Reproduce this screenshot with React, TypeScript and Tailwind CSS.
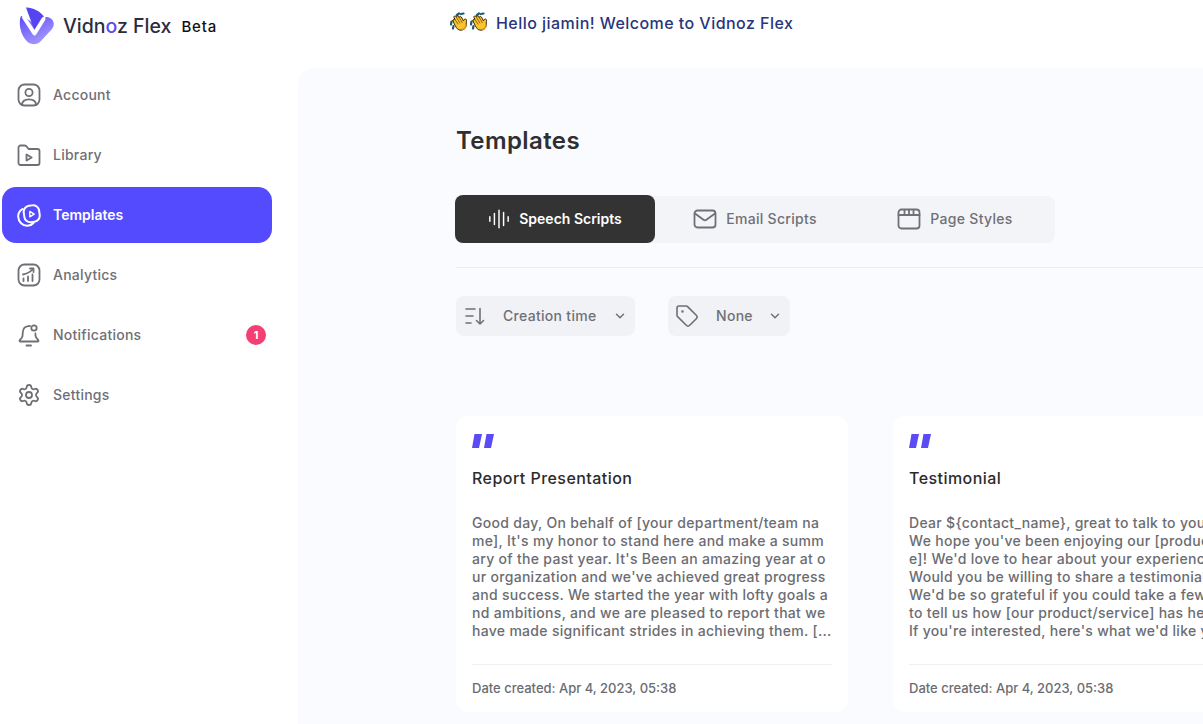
import React from 'react';
import { ChevronDown, Settings, Tag } from 'lucide-react';

const reportLines = [
  'Good day, On behalf of [your department/team na',
  "me], It's my honor to stand here and make a summ",
  "ary of the past year. It's Been an amazing year at o",
  "ur organization and we've achieved great progress",
  'and success. We started the year with lofty goals a',
  'nd ambitions, and we are pleased to report that we',
  'have made significant strides in achieving them. [...',
];

const testimonialLines = [
  'Dear ${contact_name}, great to talk to you today.',
  "We hope you've been enjoying our [product/servic",
  "e]! We'd love to hear about your experience so far.",
  'Would you be willing to share a testimonial with us?',
  "We'd be so grateful if you could take a few minutes",
  'to tell us how [our product/service] has helped you.',
  "If you're interested, here's what we'd like you to",
];

function AccountIcon() {
  return (
    <svg width="24" height="24" viewBox="0 0 24 24" fill="none" stroke="currentColor" strokeWidth="1.8" strokeLinecap="round" strokeLinejoin="round">
      <rect x="1.5" y="1.5" width="21" height="21" rx="6" />
      <circle cx="12" cy="9.5" r="3.6" />
      <path d="M4.8 22c.4-3.6 3-5.6 7.2-5.600s6.800 2 7.200 5.600" />
    </svg>
  );
}

function LibraryIcon() {
  return (
    <svg width="24" height="24" viewBox="0 0 24 24" fill="none" stroke="currentColor" strokeWidth="1.8" strokeLinecap="round" strokeLinejoin="round">
      <path d="M1.500 8V4.500a2 2 0 0 1 2-2h4.200c1 0 1.600.4 2.200 1.200l1.600 2.300h9a2 2 0 0 1 2 2v12a2 2 0 0 1-2 2H3.500a2 2 0 0 1-2-2V8" />
      <path d="M9.500 11.500v6l5.200-3z" />
    </svg>
  );
}

function TemplatesIcon() {
  return (
    <svg width="24" height="24" viewBox="0 0 24 24" fill="none" stroke="currentColor" strokeWidth="2" strokeLinecap="round" strokeLinejoin="round">
      <rect x="7" y="2.500" width="15.500" height="16.500" rx="6" transform="rotate(-8 15 11)" />
      <path d="M5.500 6C2.600 7.800 1 10.600 1.200 13.800c.3 5 4.300 9 9.300 8.900 2.500 0 4.500-1 6-2.700" />
      <path d="M12.800 8.400v5.400l4.400-2.700z" strokeWidth="1.400" />
    </svg>
  );
}

function AnalyticsIcon() {
  return (
    <svg width="24" height="24" viewBox="0 0 24 24" fill="none" stroke="currentColor" strokeWidth="1.800" strokeLinecap="round" strokeLinejoin="round">
      <rect x="1.500" y="1.500" width="21" height="21" rx="6" />
      <path d="M6.500 18v-2.500M11 18v-4.500M15.500 18v-6.500M6 11.500c3.800-.6 7-2.300 10-5.500" />
      <path d="M13 5.500h3.500V9" />
    </svg>
  );
}

function BellIcon() {
  return (
    <svg width="24" height="24" viewBox="0 0 24 24" fill="none" stroke="currentColor" strokeWidth="1.800" strokeLinecap="round" strokeLinejoin="round">
      <path d="M13 3.100c-.6-.1-1.200-.1-1.800 0C8 3.500 6 6.200 5.800 9.300l-.3 3.800c-.1 1.400-1.400 2.700-2.700 3.900-.6.700-.2 1.500.7 1.500h17c.9 0 1.300-.8.700-1.500-1.300-1.200-2.400-2.500-2.600-3.900l-.2-2.600" />
      <circle cx="17" cy="5" r="2.700" />
      <path d="M9.500 22.500h4.500" />
    </svg>
  );
}

function WaveIcon() {
  return (
    <svg width="22" height="24" viewBox="0 0 24 24" fill="none" stroke="currentColor" strokeWidth="1.600" strokeLinecap="round">
      <path d="M2 9.500v5M7 6v12M12 2.500v19M17 5v14M22 9.500v5" />
    </svg>
  );
}

function MailIcon() {
  return (
    <svg width="24" height="24" viewBox="0 0 24 24" fill="none" stroke="currentColor" strokeWidth="1.800" strokeLinecap="round" strokeLinejoin="round">
      <rect x="1.500" y="3.500" width="21" height="17" rx="3" />
      <path d="m2 6.500 8.500 6.300c.9.700 2 .7 2.900 0L22 6.500" />
    </svg>
  );
}

function PageIcon() {
  return (
    <svg width="24" height="24" viewBox="0 0 24 24" fill="none" stroke="currentColor" strokeWidth="1.800" strokeLinecap="round" strokeLinejoin="round">
      <rect x="1.500" y="2.500" width="21" height="19" rx="3" />
      <path d="M1.500 8h21M7.500 3v4.500M12 3v4.500M16.500 3v4.500" />
    </svg>
  );
}

function SortIcon() {
  return (
    <svg width="22" height="22" viewBox="0 0 22 22" fill="none" stroke="currentColor" strokeWidth="1.600" strokeLinecap="round" strokeLinejoin="round">
      <path d="M2 4h9M2 11h7M2 18h5M16 3.500V19M12.500 15.500 16 19l3.500-3.500" />
    </svg>
  );
}

function ClapIcon() {
  return (
    <svg width="20" height="20" viewBox="0 0 20 20" strokeLinecap="round" strokeLinejoin="round" fill="none">
      <path d="M7 3 9 1.500M11 2l2.500-.5M1.500 9.500 1 12.500M3.500 14l-.5 2.500" stroke="#1d5b6e" strokeWidth="2.200" />
      <path d="M3 9c-.6-1.500 1-2.400 2-1.400L4 5.500c-.6-1.400 1.200-2.200 2-1l.5.900c-.3-1.500 1.500-2.100 2.200-.8l.6 1c-.1-1.300 1.500-1.700 2.100-.6l2.100 4c.3-1.300 1-2.200 2.100-1.900 1.100.3 1.100 1.400.8 2.500-.5 2 .3 3.600-.7 5.600-1.500 3-5.300 3.800-8 2C5.800 15.300 4.400 12 3 9z" fill="#fbc531" stroke="#33270a" strokeWidth="1" />
      <path d="m5 7.600 3 4.400M6.500 5.400l3.400 5.600M9.300 5.600l3 5.100" stroke="#8a5a08" strokeWidth="0.900" />
      <path d="M15.800 13c.3 2.300-1.500 4.300-3.800 4.400" stroke="#e8920c" strokeWidth="1.300" />
    </svg>
  );
}

function Logo() {
  return (
    <svg width="36" height="38" viewBox="0 0 36 38">
      <defs>
        <linearGradient id="logoA" x1="0.1" y1="0" x2="0.7" y2="1">
          <stop offset="0" stopColor="#5d4dff" />
          <stop offset="1" stopColor="#aa9dfb" />
        </linearGradient>
      </defs>
      <path d="M2 9C0 13 0 24 6 32c4 6 11 7 16 2l11-12c3-4 2-9-2-11-3-2-6-1-8 2l-5 10C14 15 8 11 2 9z" fill="url(#logoA)" />
      <path d="M7 .5C12 0 22 4 25 10l-9 15z" fill="#5644f2" />
      <path d="M5 10.500 15.500 26.500 24.500 12" stroke="#fff" strokeWidth="4" strokeLinecap="round" strokeLinejoin="round" fill="none" />
    </svg>
  );
}

const navItems = [
  { label: 'Account', icon: <AccountIcon /> },
  { label: 'Library', icon: <LibraryIcon /> },
  { label: 'Templates', icon: <TemplatesIcon />, active: true },
  { label: 'Analytics', icon: <AnalyticsIcon /> },
  { label: 'Notifications', icon: <BellIcon />, badge: 1 },
  { label: 'Settings', icon: <Settings size={24} strokeWidth={1.8} /> },
];

const tabs = [
  { label: 'Speech Scripts', icon: <WaveIcon />, active: true },
  { label: 'Email Scripts', icon: <MailIcon /> },
  { label: 'Page Styles', icon: <PageIcon /> },
];

function ScriptCard({ title, lines }: { title: string; lines: string[] }) {
  return (
    <div className="w-[392px] h-[296px] shrink-0 rounded-xl bg-white px-4 pt-[18px] overflow-hidden">
      <div className="flex gap-[2px] h-[14px]">
        <span className="w-[10px] h-[14px] bg-[#5a4bf5] [clip-path:polygon(25%_0,100%_0,70%_100%,0_100%)]" />
        <span className="w-[10px] h-[14px] bg-[#5a4bf5] [clip-path:polygon(25%_0,100%_0,70%_100%,0_100%)]" />
      </div>
      <h3 className="mt-[18px] text-base leading-6 font-medium text-[#2b2b2b] tracking-[0.45px]">{title}</h3>
      <div className="mt-[24px] h-[126px] w-[372px] text-sm leading-[18px] font-medium text-[#6b6c72] tracking-[0.3px]">
        {lines.map((line) => (
          <div key={line} className="whitespace-nowrap">{line}</div>
        ))}
      </div>
      <div className="mt-[24px] w-[360px] border-t border-[#eeeff3] pt-[14px] text-[13px] leading-[18px] font-medium text-[#6b6c72]">
        Date created: Apr 4, 2023, 05:38
      </div>
    </div>
  );
}

export default function App() {
  return (
    <div className="h-[724px] w-[1203px] overflow-hidden bg-white flex font-['Inter',sans-serif]">
      <aside className="w-[298px] shrink-0">
        <div className="h-[67px] flex items-start pt-[7px] pl-[19px]">
          <Logo />
          <span className="ml-[8px] mt-[7px] text-[19.5px] leading-6 font-medium text-[#2a2d3e]">
            Vidn<span className="text-[#5a4bf5]">o</span>z Flex
          </span>
          <span className="ml-[10px] mt-[8px] text-[15px] leading-6 font-medium text-[#111] tracking-[0.8px]">Beta</span>
        </div>
        <nav className="flex flex-col gap-1 pl-[2px] w-[272px]">
          {navItems.map((item) => (
            <div
              key={item.label}
              className={
                item.active
                  ? 'h-14 rounded-[14px] bg-[#544bff] text-white flex items-center pl-[15px] pr-[6px]'
                  : 'h-14 text-[#6f7076] flex items-center pl-[15px] pr-[6px]'
              }
            >
              {item.icon}
              <span className={item.active ? 'ml-3 text-sm font-semibold' : 'ml-3 text-sm font-medium tracking-[0.25px]'}>{item.label}</span>
              {item.badge && (
                <span className="ml-auto w-5 h-5 rounded-full bg-[#f43f72] text-white text-[11px] font-bold flex items-center justify-center">
                  {item.badge}
                </span>
              )}
            </div>
          ))}
        </nav>
      </aside>

      <div className="flex-1 min-w-0 flex flex-col">
        <header className="h-[68px] shrink-0 flex items-start pl-[152px] pt-[12px]">
          <ClapIcon />
          <ClapIcon />
          <span className="ml-[6px] text-base leading-[22px] font-medium text-[#27357c] tracking-[0.45px]">Hello jiamin! Welcome to Vidnoz Flex</span>
        </header>
        <main className="flex-1 rounded-tl-2xl bg-[#fafbfe] pl-[158px] pt-[57px] overflow-hidden">
          <h1 className="text-2xl leading-8 font-semibold text-[#2f2f2f] tracking-[0.4px]">Templates</h1>
          <div className="-ml-px mt-[38px] relative w-[600px] h-[48px] flex">
            <div className="absolute inset-x-0 top-px bottom-0 rounded-lg bg-[#f3f4f8]" />
            {tabs.map((tab) => (
              <div
                key={tab.label}
                className={
                  tab.active
                    ? 'relative w-[200px] rounded-lg bg-[#333333] text-white flex items-center justify-center gap-[9px] text-sm font-semibold'
                    : 'relative w-[200px] text-[#6f7076] flex items-center justify-center gap-[9px] text-sm font-medium tracking-[0.3px]'
                }
              >
                {tab.icon}
                <span>{tab.label}</span>
              </div>
            ))}
          </div>
          <div className="mt-6 h-px bg-[#eceef2]" />
          <div className="mt-7 flex gap-[33px]">
            <div className="h-10 w-[179px] rounded-lg bg-[#f1f2f6] text-[#6f7076] flex items-center pl-2 pr-2 text-sm font-medium tracking-[0.3px]">
              <SortIcon />
              <span className="ml-[17px]">Creation time</span>
              <ChevronDown size={14} strokeWidth={2.5} className="ml-auto" />
            </div>
            <div className="h-10 w-[122px] rounded-lg bg-[#f1f2f6] text-[#6f7076] flex items-center pl-[7px] pr-2 text-sm font-medium tracking-[0.3px]">
              <Tag size={24} strokeWidth={1.6} />
              <span className="ml-[17px]">None</span>
              <ChevronDown size={14} strokeWidth={2.5} className="ml-auto" />
            </div>
          </div>
          <div className="mt-[80px] flex gap-[45px]">
            <ScriptCard title="Report Presentation" lines={reportLines} />
            <ScriptCard title="Testimonial" lines={testimonialLines} />
          </div>
        </main>
      </div>
    </div>
  );
}
